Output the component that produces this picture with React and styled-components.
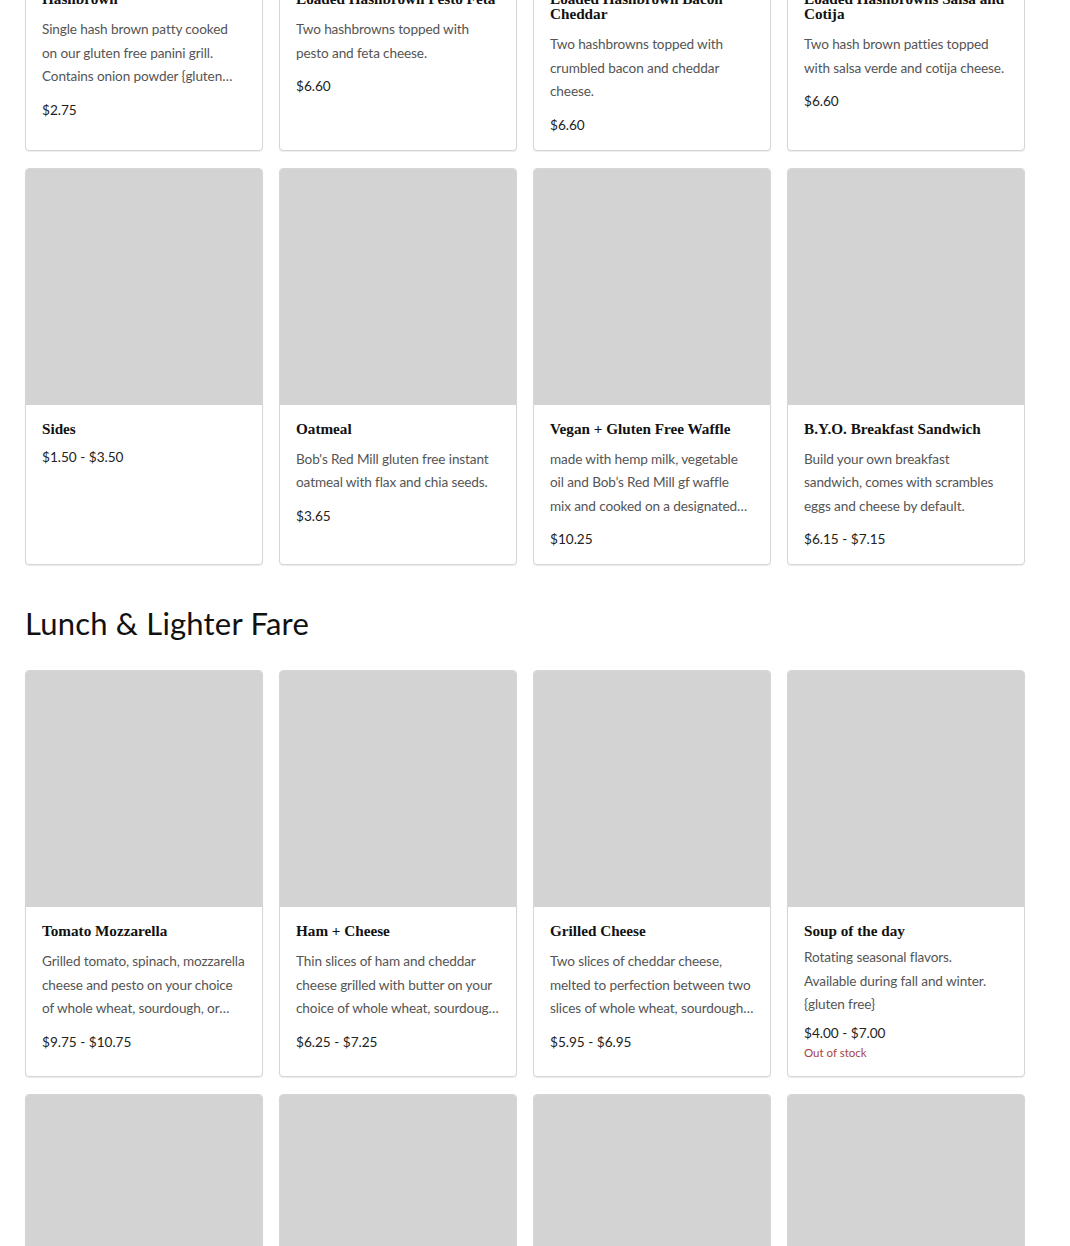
import React from "react";
import styled, { createGlobalStyle } from "styled-components";

const Global = createGlobalStyle`
  html, body { margin: 0; padding: 0; background: #fff; }
  body { font-family: Lato, "Liberation Sans", sans-serif; color: #222; }
  * { box-sizing: border-box; }
`;

const Page = styled.main`
  width: 1070px;
  padding: 0 45px 40px 25px;
  margin-top: -262px;
`;

const Section = styled.section`
  & + & { margin-top: 38px; }
`;

const Heading = styled.h2`
  margin: 0 0 27px;
  font-family: Lato, "Liberation Sans", sans-serif;
  font-weight: 400;
  font-size: 31px;
  line-height: 40px;
  color: #111;
  letter-spacing: 0.2px;
`;

const Grid = styled.div`
  display: grid;
  grid-template-columns: repeat(4, 238px);
  column-gap: 16px;
  row-gap: 17px;
`;

const Card = styled.article`
  display: flex;
  flex-direction: column;
  background: #fff;
  border: 1px solid #d6d6d6;
  border-radius: 4px;
  box-shadow: 0 1px 1px rgba(0, 0, 0, 0.08);
  overflow: hidden;
`;

const Photo = styled.div`
  width: 100%;
  aspect-ratio: 1 / 1;
  background: #d3d3d3;
`;

const Body = styled.div`
  padding: 16px 16px 15px;
  display: flex;
  flex-direction: column;
`;

const Title = styled.h3`
  margin: 0;
  font-family: "Liberation Serif", "DejaVu Serif", serif;
  font-weight: 700;
  font-size: 15.2px;
  line-height: 15px;
  color: #111;
`;

const Desc = styled.p`
  margin: ${(p) => (p.$compact ? "8px 0 0" : "12px 0 0")};
  font-size: 13.6px;
  letter-spacing: -0.12px;
  line-height: 23.5px;
  color: #555;
  white-space: pre-line;
  display: -webkit-box;
  -webkit-box-orient: vertical;
  -webkit-line-clamp: 3;
  overflow: hidden;
`;

const Price = styled.div`
  margin-top: ${(p) => (p.$compact ? "6px" : "11px")};
  font-size: 13.6px;
  line-height: 20px;
  color: #222;
`;

const Stock = styled.div`
  margin-top: 1px;
  font-size: 11.5px;
  line-height: 17px;
  color: #a94442;
`;

const breakfast = [
  {
    title: "Hashbrown",
    desc: "Single hash brown patty cooked on our gluten free panini grill. Contains onion powder {gluten free}",
    price: "$2.75",
  },
  {
    title: "Loaded Hashbrown Pesto Feta",
    desc: "Two hashbrowns topped with pesto and feta cheese.",
    price: "$6.60",
  },
  {
    title: "Loaded Hashbrown Bacon Cheddar",
    desc: "Two hashbrowns topped with crumbled bacon and cheddar cheese.",
    price: "$6.60",
  },
  {
    title: "Loaded Hashbrowns Salsa and Cotija",
    desc: "Two hash brown patties topped with salsa verde and cotija cheese.",
    price: "$6.60",
  },
  { title: "Sides", price: "$1.50 - $3.50" },
  {
    title: "Oatmeal",
    desc: "Bob's Red Mill gluten free instant oatmeal with flax and chia seeds.",
    price: "$3.65",
  },
  {
    title: "Vegan + Gluten Free Waffle",
    desc: "made with hemp milk, vegetable oil and Bob’s Red Mill gf waffle\nmix and cooked on a designated gluten free waffle iron.",
    price: "$10.25",
  },
  {
    title: "B.Y.O. Breakfast Sandwich",
    desc: "Build your own breakfast sandwich, comes with scrambles eggs and cheese by default.",
    price: "$6.15 - $7.15",
  },
];

const lunch = [
  {
    title: "Tomato Mozzarella",
    desc: "Grilled tomato, spinach, mozzarella cheese and pesto on your choice of whole wheat, sourdough, or gluten free bread.",
    price: "$9.75 - $10.75",
  },
  {
    title: "Ham + Cheese",
    desc: "Thin slices of ham and cheddar cheese grilled with butter on your choice of whole wheat, sourdough, or gluten free bread.",
    price: "$6.25 - $7.25",
  },
  {
    title: "Grilled Cheese",
    desc: "Two slices of cheddar cheese, melted to perfection between two slices of whole wheat, sourdough, or gluten free bread.",
    price: "$5.95 - $6.95",
  },
  {
    title: "Soup of the day",
    desc: "Rotating seasonal flavors.\nAvailable during fall and winter.\n{gluten free}",
    price: "$4.00 - $7.00",
    stock: "Out of stock",
    compact: true,
  },
  { title: "Turkey Pesto", desc: "Sliced turkey with pesto and provolone.", price: "$9.75" },
  { title: "Chicken Salad", desc: "House chicken salad on your choice of bread.", price: "$9.25" },
  { title: "Garden Salad", desc: "Mixed greens with seasonal vegetables.", price: "$7.50" },
  { title: "Hummus Plate", desc: "Hummus with vegetables and gluten free crackers.", price: "$8.00" },
];

function MenuCard({ item }) {
  return (
    <Card>
      <Photo />
      <Body>
        <Title>{item.title}</Title>
        {item.desc && <Desc $compact={item.compact}>{item.desc}</Desc>}
        <Price $compact={item.compact}>{item.price}</Price>
        {item.stock && <Stock>{item.stock}</Stock>}
      </Body>
    </Card>
  );
}

export default function App() {
  return (
    <>
      <Global />
      <Page>
        <Section>
          <Grid>
            {breakfast.map((it) => (
              <MenuCard key={it.title} item={it} />
            ))}
          </Grid>
        </Section>
        <Section>
          <Heading>Lunch &amp; Lighter Fare</Heading>
          <Grid>
            {lunch.map((it) => (
              <MenuCard key={it.title} item={it} />
            ))}
          </Grid>
        </Section>
      </Page>
    </>
  );
}
